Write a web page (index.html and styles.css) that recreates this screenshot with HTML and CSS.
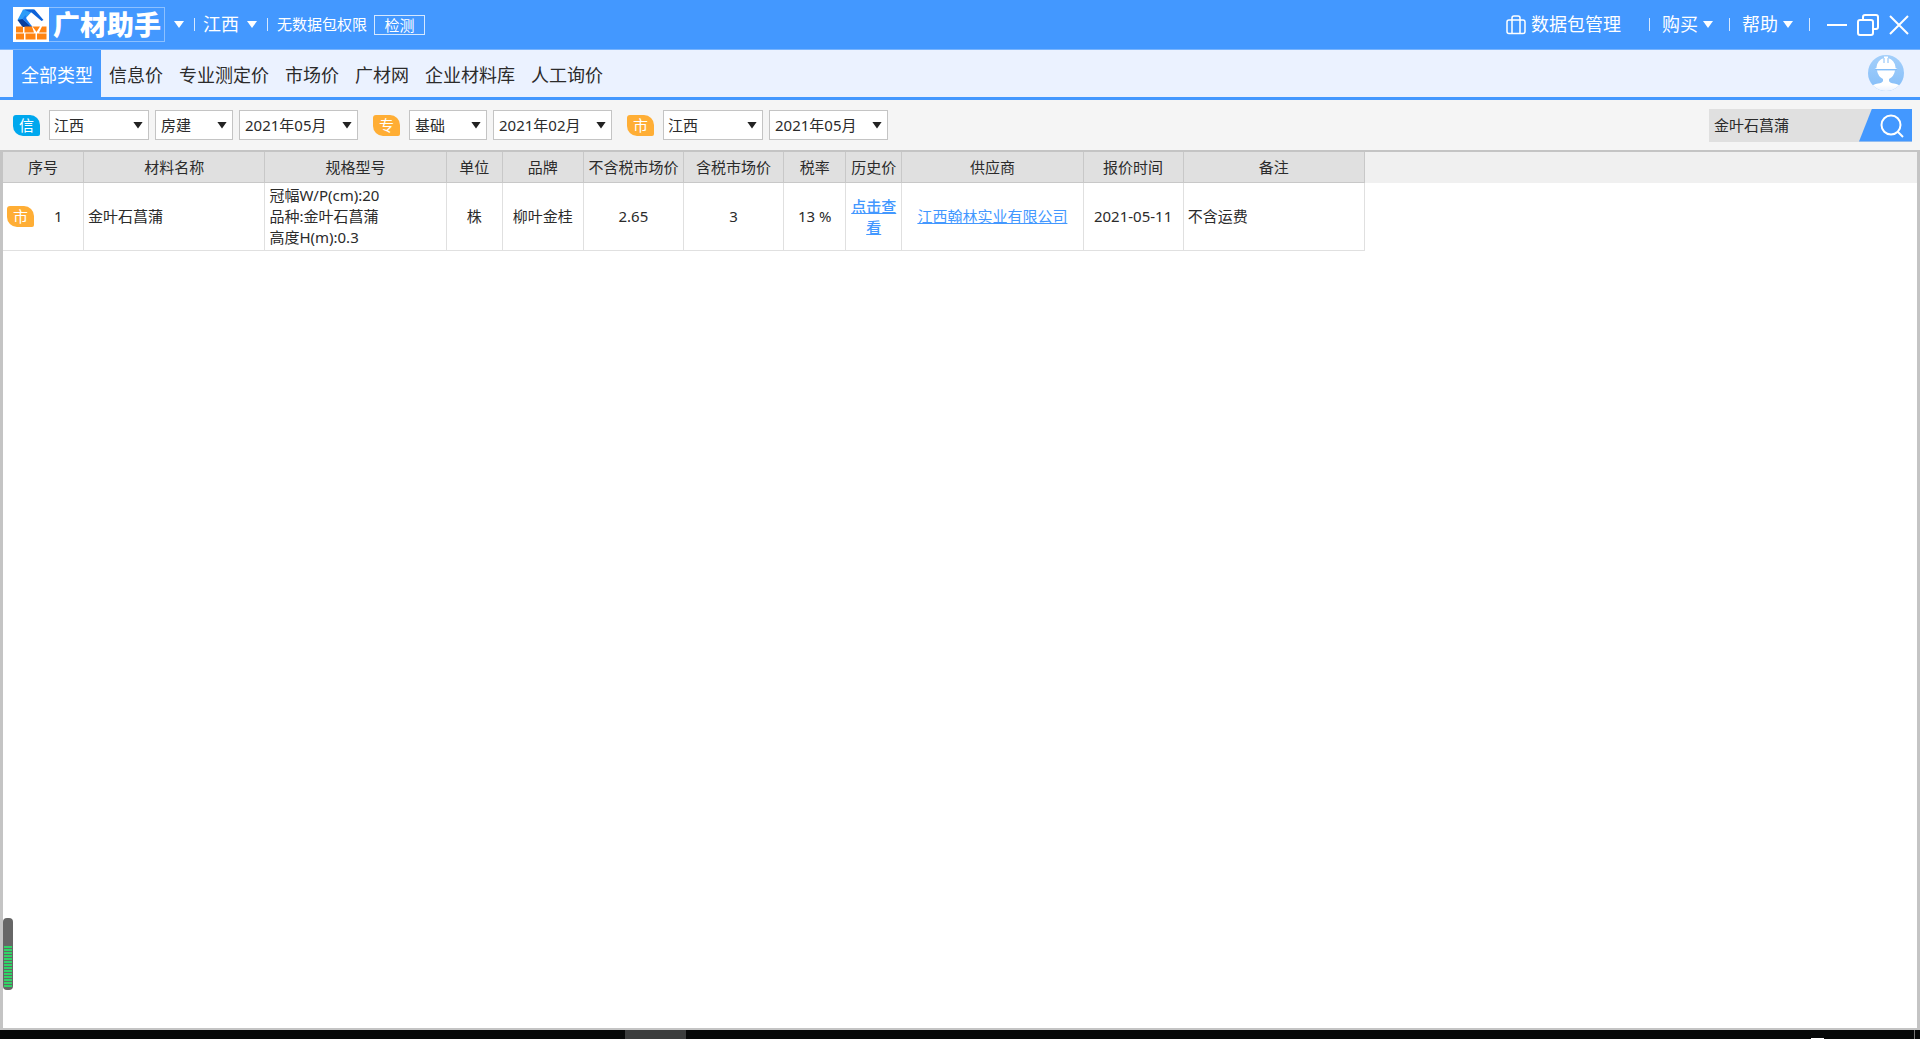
FILE: index.html
```html
<!DOCTYPE html>
<html lang="zh-CN">
<head>
<meta charset="utf-8">
<title>广材助手</title>
<link rel="stylesheet" href="styles.css">
</head>
<body>
<div class="app">
  <header class="topbar">
    <div class="brand">
      <svg class="brand-mark" viewBox="0 0 36 35" aria-hidden="true">
        <rect width="36" height="35" fill="#fff"/>
        <path d="M10 2.500h11l-3 3-6 6.500-3 3-4.500-2z" fill="#2b9cf8"/>
        <path d="M4.500 13l5-1 9 7v1h-9z" fill="#0a3f9c"/>
        <path d="M11 2.500h10.500l9 10.500-2 1-10-8.500-3-1z" fill="#0e62d8"/>
        <path d="M9.500 12l3-4 1 4 6 8-2-.5z" fill="#1a7cf0"/>
        <path d="M3 19.500h7v6H3zM11.500 19.500h7.500l2 6h-9.500zM19.500 19.500h7.500l-3.500 5.500zM26 25.500l3-6h4.500v6z" fill="#ff8412"/>
        <path d="M3 26.500h8v6H3zM12.500 26.500h10v6h-10zM24 26.500h9.500v6H24z" fill="#ff8412"/>
      </svg>
      <span class="brand-name">广材助手</span>
    </div>
    <button class="caret" type="button" aria-label="主菜单"></button>
    <span class="bar"></span>
    <button class="menu" type="button">江西<span class="caret"></span></button>
    <span class="bar"></span>
    <span class="notice">无数据包权限</span>
    <button class="check" type="button">检测</button>
    <div class="right">
      <button class="menu package" type="button">
        <svg width="20" height="20" viewBox="0 0 20 20" fill="none" stroke="#fff" stroke-width="1.500" aria-hidden="true"><rect x="1" y="5" width="18" height="13.500" rx="2"/><path d="M6 18V3q0-2 2-2h4q2 0 2 2v15"/></svg>数据包管理</button>
      <span class="bar"></span>
      <button class="menu" type="button">购买<span class="caret"></span></button>
      <span class="bar"></span>
      <button class="menu" type="button">帮助<span class="caret"></span></button>
      <span class="bar"></span>
      <div class="window-controls">
        <button type="button" aria-label="最小化"><svg width="20" height="22" viewBox="0 0 20 22" stroke="#fff" stroke-width="2"><path d="M0 11h20"/></svg></button>
        <button type="button" aria-label="还原"><svg width="22" height="22" viewBox="0 0 22 22" fill="none" stroke="#fff" stroke-width="2"><rect x="1" y="6" width="15" height="15" rx="2"/><path d="M6 5V3q0-2 2-2h11q2 0 2 2v10q0 2-2 2h-2"/></svg></button>
        <button type="button" aria-label="关闭"><svg width="20" height="22" viewBox="0 0 20 22" stroke="#fff" stroke-width="2"><path d="M1 2l18 18M19 2L1 20"/></svg></button>
      </div>
    </div>
  </header>

  <nav class="tabs">
    <a class="tab active" href="#all">全部类型</a>
    <a class="tab" href="#info">信息价</a>
    <a class="tab" href="#pro">专业测定价</a>
    <a class="tab" href="#market">市场价</a>
    <a class="tab" href="#site">广材网</a>
    <a class="tab" href="#library">企业材料库</a>
    <a class="tab" href="#inquiry">人工询价</a>
    <button class="avatar" type="button" aria-label="用户">
      <svg width="36" height="36" viewBox="0 0 36 36" aria-hidden="true">
        <defs>
          <linearGradient id="sky" x2="0" y2="1"><stop stop-color="#a3cffb"/><stop offset="1" stop-color="#84bdf8"/></linearGradient>
          <linearGradient id="body" x2="0" y2="1"><stop offset=".7" stop-color="#fff"/><stop offset="1" stop-color="#ebf2ff"/></linearGradient>
          <clipPath id="disc"><circle cx="18" cy="18" r="18"/></clipPath>
        </defs>
        <g clip-path="url(#disc)">
          <rect width="36" height="36" fill="url(#sky)"/>
          <path d="M9 15.500h18q-1 6-6 8.500v2q1 2 5 2.500 5 .5 7 4V36H3v-3.500q2-3.500 7-4 4-.5 5-2.500v-2q-5-2.500-6-8.500z" fill="url(#body)"/>
          <path d="M8.500 12q1-7 7.500-9V1.500h4V3q6.500 2 7.500 9v1l2 1h-23l2-1z" fill="#fff"/>
          <path d="M16 3v5M20 3v5M7 14.500h22" stroke="#84bdf8" fill="none"/>
        </g>
      </svg>
    </button>
  </nav>

  <form class="filters">
    <span class="tag blue">信</span>
    <span class="select medium"><select aria-label="信息价地区"><option>江西</option></select></span>
    <span class="select small"><select aria-label="信息价专业"><option>房建</option></select></span>
    <span class="select large"><select aria-label="信息价期数"><option>2021年05月</option></select></span>
    <span class="tag next">专</span>
    <span class="select small"><select aria-label="测定价专业"><option>基础</option></select></span>
    <span class="select large"><select aria-label="测定价期数"><option>2021年02月</option></select></span>
    <span class="tag next">市</span>
    <span class="select medium"><select aria-label="市场价地区"><option>江西</option></select></span>
    <span class="select large"><select aria-label="市场价期数"><option>2021年05月</option></select></span>
    <div class="search">
      <input type="text" value="金叶石菖蒲" aria-label="搜索材料">
      <button type="button" aria-label="搜索"><svg width="24" height="24" viewBox="0 0 24 24" fill="none" stroke="#fff" stroke-width="2"><circle cx="11" cy="11" r="9.500"/><path d="M17.500 17.500l5.500 5.500"/></svg></button>
    </div>
  </form>

  <main class="results">
    <table class="grid">
      <colgroup>
        <col class="w-index"><col class="w-wide"><col class="w-wide"><col class="w-narrow"><col class="w-index"><col class="w-price"><col class="w-price"><col class="w-rate"><col class="w-narrow"><col class="w-wide"><col class="w-price"><col class="w-wide">
      </colgroup>
      <thead>
        <tr><th>序号</th><th>材料名称</th><th>规格型号</th><th>单位</th><th>品牌</th><th>不含税市场价</th><th>含税市场价</th><th>税率</th><th>历史价</th><th>供应商</th><th>报价时间</th><th>备注</th></tr>
      </thead>
      <tbody>
        <tr>
          <td><div class="index"><span class="tag">市</span><span>1</span></div></td>
          <td class="start">金叶石菖蒲</td>
          <td class="start">冠幅W/P(cm):20<br>品种:金叶石菖蒲<br>高度H(m):0.3</td>
          <td>株</td>
          <td>柳叶金桂</td>
          <td>2.65</td>
          <td>3</td>
          <td>13 %</td>
          <td><a class="history" href="#history">点击查看</a></td>
          <td><a class="supplier" href="#supplier">江西翰林实业有限公司</a></td>
          <td>2021-05-11</td>
          <td class="start">不含运费</td>
        </tr>
      </tbody>
    </table>
    <div class="meter"><span></span></div>
  </main>

  <footer class="taskbar"><span class="task"></span><span class="tray"></span></footer>
</div>
</body>
</html>
```
FILE: styles.css
```css
* {
  box-sizing: border-box;
}

body {
  margin: 0;
  font: 15px/21px "Noto Sans", "Noto Sans CJK SC", sans-serif;
  color: #2b2b2b;
  background: #fff;
}

button {
  padding: 0;
  border: 0;
  background: none;
  font: inherit;
  color: inherit;
}

svg {
  display: block;
}

.app {
  display: flex;
  flex-direction: column;
  min-height: 100vh;
}

/* Title bar */
.topbar {
  display: flex;
  align-items: center;
  height: 50px;
  padding: 0 11px 0 13px;
  border-bottom: 1px solid #79b4fd;
  background: #4398ff;
  color: #fff;
}

.brand {
  display: flex;
  align-items: center;
  height: 35px;
  width: 152px;
  margin-right: 9px;
  border: 1px solid #8cc0ff;
}

.brand-mark {
  width: 36px;
  height: 35px;
  margin-left: -1px;
}

.brand-name {
  margin-left: 4px;
  font-size: 27px;
  line-height: 33px;
  font-weight: 900;
}

.caret {
  width: 10px;
  height: 7px;
  background: #fff;
  clip-path: polygon(0 0, 100% 0, 50% 100%);
}

.bar {
  width: 1px;
  height: 13px;
  margin: 0 8px 0 10px;
  background: #d5e8ff;
}

.menu {
  display: flex;
  align-items: center;
  gap: 8px;
  font-size: 18px;
}

.notice {
  margin: 0 7px 0 1px;
}

.check {
  width: 51px;
  height: 20px;
  border: 1px solid #d5e8ff;
  line-height: 18px;
}

.right {
  display: flex;
  align-items: center;
  margin-left: auto;
}

.right .menu {
  gap: 5px;
}

.right .bar {
  margin: 0 12px 0 16px;
}

.right .package {
  margin-right: 12px;
}

.window-controls {
  display: flex;
  gap: 10px;
  margin-left: 5px;
}

/* Category tabs */
.tabs {
  display: flex;
  height: 50px;
  padding: 0 16px 0 13px;
  border-bottom: 3px solid #4398ff;
  background: #ebf2ff;
  font-size: 18px;
}

.tab {
  padding: 0 8px;
  line-height: 51px;
  color: #2b2b2b;
  text-decoration: none;
}

.tab.active {
  background: #4398ff;
  color: #fff;
}

.avatar {
  margin: 5px 0 auto auto;
}

/* Filters */
.filters {
  display: flex;
  align-items: center;
  gap: 6px;
  height: 50px;
  padding: 0 8px 0 13px;
  background: #f5f5f5;
}

.tag {
  width: 27px;
  height: 21px;
  margin-right: 3px;
  border-radius: 3px 10px 2px 10px;
  background: #ffae35;
  color: #fff;
  line-height: 21px;
  text-align: center;
}

.tag.blue {
  background: #00a8ee;
}

.tag.next {
  margin-left: 9px;
}

.select {
  display: grid;
  align-items: center;
  height: 30px;
  border: 1px solid #c4c4c4;
  background: #fff;
}

.select > select,
.select::after {
  grid-area: 1 / 1;
}

.select::after {
  content: "";
  justify-self: end;
  width: 10px;
  height: 7px;
  margin-right: 5px;
  background: #222;
  clip-path: polygon(0 0, 100% 0, 50% 100%);
  pointer-events: none;
}

.select > select {
  width: 100%;
  height: 28px;
  padding: 0 4px;
  border: 0;
  appearance: none;
  background: none;
  font: inherit;
  color: inherit;
}

.small {
  width: 78px;
}

.medium {
  width: 100px;
}

.large {
  width: 119px;
}

.small > select,
.large > select {
  padding: 0 5px;
}

.search {
  display: flex;
  width: 203px;
  height: 33px;
  margin-left: auto;
  background: #e0e0e0;
}

.search input {
  flex: 1;
  min-width: 0;
  padding: 0 5px;
  border: 0;
  background: none;
  font: inherit;
  color: inherit;
}

.search button {
  display: grid;
  place-items: center;
  width: 53px;
  padding: 2px 0 0 12px;
  background: #4398ff;
  clip-path: polygon(13px 0, 100% 0, 100% 100%, 0 100%);
}

/* Results */
.results {
  position: relative;
  flex: 1;
  border: solid #c4c4c4;
  border-width: 2px 3px 2px 3px;
  background: linear-gradient(#f0f0f0 31px, #fff 31px);
}

.grid {
  table-layout: fixed;
  width: 1362px;
  border-collapse: separate;
  border-spacing: 0;
  text-align: center;
}

.w-index {
  width: 81px;
}

.w-wide {
  width: 181px;
}

.w-narrow {
  width: 56px;
}

.w-price {
  width: 100px;
}

.w-rate {
  width: 62px;
}

.grid th {
  height: 31px;
  padding: 0;
  border: solid #c8c8c8;
  border-width: 0 1px 1px 0;
  background: #e0e0e0;
  font-weight: 400;
  white-space: nowrap;
}

.grid td {
  height: 68px;
  padding: 0;
  border: solid #e0e0e0;
  border-width: 0 1px 1px 0;
}

.grid .start {
  padding-left: 4px;
  text-align: left;
}

.index {
  display: flex;
  align-items: center;
  gap: 17px;
  padding-left: 4px;
}

.history,
.supplier {
  color: #4398ff;
}

.history {
  font-weight: 500;
}

.meter {
  position: absolute;
  left: 0;
  bottom: 38px;
  width: 10px;
  height: 72px;
  padding: 28px 1px 3px;
  border-radius: 4px;
  background: #666;
}

.meter span {
  display: block;
  height: 100%;
  background: repeating-linear-gradient(#2fd566 0 2px, #666 2px 3px);
}

/* Taskbar edge */
.taskbar {
  display: flex;
  justify-content: space-between;
  height: 9px;
  padding: 0 5px 0 625px;
  background: #060808;
}

.task {
  width: 61px;
  background: #3b3d3d;
}

.tray {
  width: 104px;
  border-right: 1px solid #777;
  background: linear-gradient(#fff, #fff) 0 100% / 13px 1px no-repeat;
}
```
